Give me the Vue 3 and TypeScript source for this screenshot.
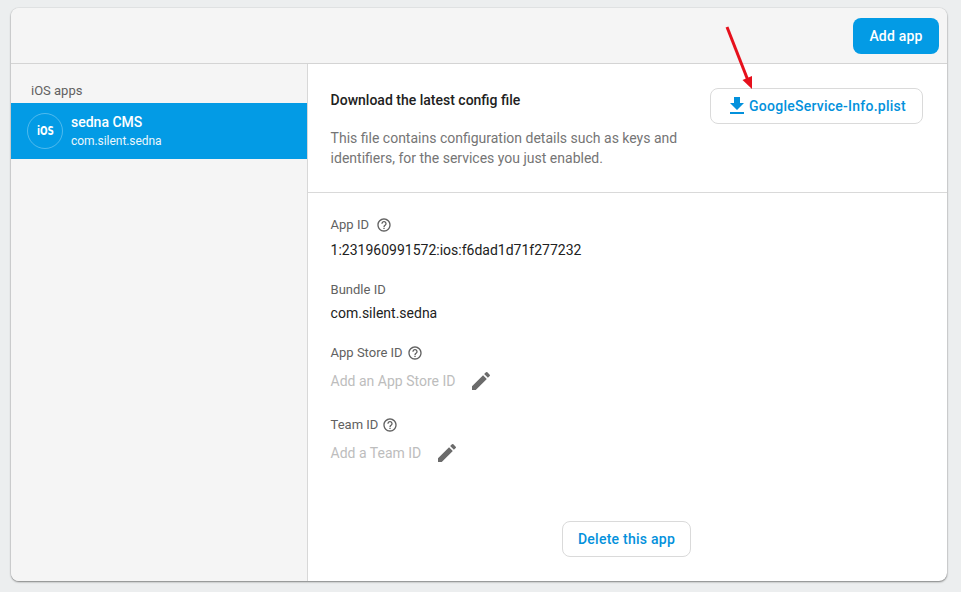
<script setup lang="ts">
interface Field { label: string; value?: string; placeholder?: string; help: boolean; gapClass: string }
const fields: Field[] = [
  { label: 'App ID', value: '1:231960991572:ios:f6dad1d71f277232', help: true, gapClass: 'f-app' },
  { label: 'Bundle ID', value: 'com.silent.sedna', help: false, gapClass: 'f-bundle' },
  { label: 'App Store ID', placeholder: 'Add an App Store ID', help: true, gapClass: 'f-store' },
  { label: 'Team ID', placeholder: 'Add a Team ID', help: true, gapClass: 'f-team' },
]
</script>

<template>
  <div class="page">
    <div class="card">
      <header class="top">
        <button class="add">Add app</button>
      </header>
      <div class="body">
        <aside class="side">
          <div class="side-title">iOS apps</div>
          <div class="app-item">
            <div class="badge"><span>iOS</span></div>
            <div class="app-text">
              <div class="app-name">sedna CMS</div>
              <div class="app-id">com.silent.sedna</div>
            </div>
          </div>
        </aside>
        <main class="main">
          <section class="download">
            <div class="dl-text">
              <h3>Download the latest config file</h3>
              <p>This file contains configuration details such as keys and identifiers, for the services you just enabled.</p>
            </div>
            <button class="outline plist">
              <svg width="24" height="24" viewBox="0 0 24 24"><path fill="#0391dc" d="M19 9h-4V3H9v6H5l7 7 7-7zM5 18v2h14v-2H5z" /></svg>
              GoogleService-Info.plist
            </button>
          </section>
          <section class="fields">
            <div v-for="f in fields" :key="f.label" class="field" :class="f.gapClass">
              <div class="label">
                {{ f.label }}
                <svg v-if="f.help" class="help" width="16" height="16" viewBox="0 0 24 24"><path fill="#616161" d="M11 18h2v-2h-2v2zm1-16C6.48 2 2 6.48 2 12s4.48 10 10 10 10-4.48 10-10S17.52 2 12 2zm0 18c-4.41 0-8-3.59-8-8s3.59-8 8-8 8 3.59 8 8-3.59 8-8 8zm0-14c-2.21 0-4 1.79-4 4h2c0-1.1.9-2 2-2s2 .9 2 2c0 2-3 1.75-3 5h2c0-2.25 3-2.5 3-5 0-2.21-1.79-4-4-4z" /></svg>
              </div>
              <div v-if="f.value" class="value">{{ f.value }}</div>
              <div v-else class="placeholder">
                <span>{{ f.placeholder }}</span>
                <svg width="24" height="24" viewBox="0 0 24 24"><path fill="#6b6b6b" d="M3 17.25V21h3.75L17.81 9.94l-3.75-3.75L3 17.25zM20.71 7.04a1 1 0 0 0 0-1.41l-2.34-2.34a1 1 0 0 0-1.41 0l-1.83 1.83 3.75 3.75 1.83-1.83z" /></svg>
              </div>
            </div>
          </section>
          <div class="delete-row">
            <button class="outline del">Delete this app</button>
          </div>
        </main>
      </div>
      <svg class="arrow" width="30" height="66" viewBox="0 0 30 66">
        <path d="M2 1 L24 57" stroke="#e6101c" stroke-width="3" fill="none" />
        <path d="M27 63 L17.5 54 L27 50 Z" fill="#e6101c" />
      </svg>
    </div>
  </div>
</template>

<style>
html, body { margin: 0; background: #eceeef; }
</style>

<style scoped>
.page {
  width: 961px;
  height: 592px;
  padding: 8px 14px 11px 11px;
  box-sizing: border-box;
  font-family: Roboto, "Noto Sans", sans-serif;
  overflow: hidden;
}
.card {
  position: relative;
  height: 100%;
  border-radius: 8px;
  background: #fff;
  overflow: hidden;
  display: flex;
  flex-direction: column;
  box-shadow: 0 1px 2px rgba(0,0,0,.45), 0 0 1px rgba(0,0,0,.3);
}
.top {
  flex: none;
  height: 45px;
  background: #f5f5f5;
  border-bottom: 1px solid #d4d4d4;
  display: flex;
  justify-content: flex-end;
  align-items: flex-start;
  padding: 10px 8px 0 0;
}
.add {
  width: 86px;
  height: 36px;
  border: 0;
  border-radius: 8px;
  background: #039be5;
  color: #fff;
  font: 500 14px Roboto, sans-serif;
  letter-spacing: .2px;
}
.body { flex: 1; display: flex; min-height: 0; }
.side {
  width: 296px;
  flex: none;
  background: #f5f5f5;
  border-right: 1px solid #d8d8d8;
}
.side-title {
  height: 39px;
  box-sizing: border-box;
  padding: 19px 0 0 20px;
  font-size: 13px;
  line-height: 15px;
  color: #616161;
}
.app-item {
  height: 56px;
  background: #039be5;
  display: flex;
  align-items: center;
  padding-left: 16px;
  color: #fff;
}
.badge {
  width: 34px;
  height: 34px;
  border: 1px solid rgba(255,255,255,.3);
  border-radius: 50%;
  display: flex;
  align-items: center;
  justify-content: center;
  font: 700 12px "DejaVu Sans", sans-serif;
}
.badge span { display: block; transform: scaleX(.74); }
.app-text { margin-left: 8px; }
.app-name { font-size: 14px; font-weight: 500; line-height: 18px; margin-bottom: 2px; }
.app-id { font-size: 12px; line-height: 16px; opacity: .92; letter-spacing: -.05px; }
.main { flex: 1; min-width: 0; display: flex; flex-direction: column; }
.download {
  height: 129px;
  flex: none;
  box-sizing: border-box;
  border-bottom: 1px solid #d9d9d9;
  display: flex;
  justify-content: space-between;
  padding: 24px 24px 0 22.6px;
}
.dl-text { width: 360px; }
h3 {
  margin: 0;
  font-size: 14px;
  line-height: 24px;
  font-weight: 500;
  color: #212121;
}
p {
  margin: 16px 0 0;
  font-size: 14px;
  line-height: 20px;
  color: #757575;
}
.outline {
  background: #fff;
  border: 1px solid #dadada;
  border-radius: 8px;
  color: #0391dc;
  font: 500 14px Roboto, sans-serif;
  letter-spacing: .25px;
  display: flex;
  align-items: center;
  justify-content: center;
}
.plist { width: 213px; height: 36px; padding: 0 2px 0 0; }
.fields { padding: 0 22.6px; flex: none; }
.field { display: flex; flex-direction: column; }
.label {
  display: flex;
  align-items: center;
  gap: 4px;
  font-size: 13px;
  line-height: 16px;
  color: #616161;
}
.value { font-size: 14px; line-height: 20px; color: #212121; }
.placeholder { display: flex; align-items: center; font-size: 14px; color: #bdbdbd; gap: 14px; height: 24px; }
.help { flex: none; }
.f-app { margin-top: 24px; }
.f-app .label { gap: 7px; }
.f-app .value { margin-top: 7px; }
.f-bundle { margin-top: 22px; }
.f-bundle .value { margin-top: 5px; }
.f-store { margin-top: 22px; }
.f-store .placeholder { margin-top: 8px; }
.f-team { margin-top: 24px; }
.f-team .placeholder { margin-top: 8px; }
.delete-row { margin-top: auto; display: flex; justify-content: center; padding: 0 2px 24px 0; }
.del { width: 129px; height: 36px; }
.arrow { position: absolute; left: 714px; top: 18px; }
</style>
